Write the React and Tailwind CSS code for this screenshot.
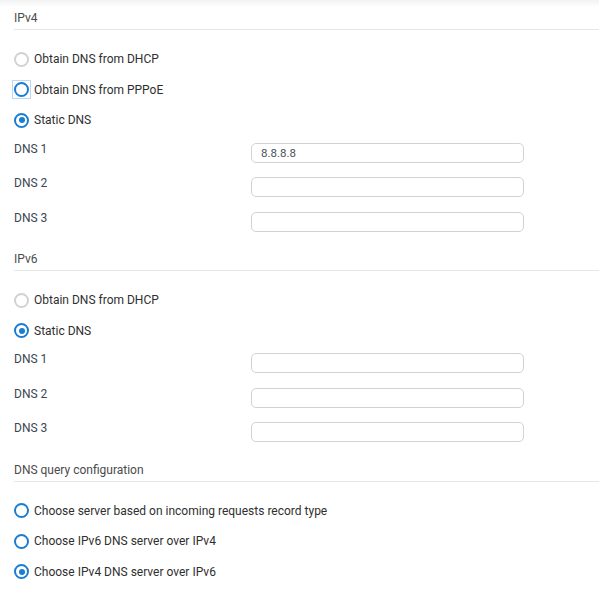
import { useState } from 'react';

function Radio({ label, checked, focused, muted }) {
  return (
    <label className="flex items-center h-[30.5px] pl-[13px] gap-[4px] cursor-pointer">
      <span
        className={`flex items-center justify-center w-[17px] h-[17px] ${
          focused ? 'outline outline-1 outline-[#bcd8f3]' : ''
        }`}
      >
        <span
          className={`flex items-center justify-center w-[15px] h-[15px] rounded-full border-2 ${
            muted ? 'border-[#d2d2d2]' : 'border-[#1a7dd1]'
          }`}
        >
          {checked && <span className="w-[6px] h-[6px] rounded-full bg-[#1a7dd1]" />}
        </span>
      </span>
      <span className="text-[12px] text-[#2f2f2f]">{label}</span>
    </label>
  );
}

function DnsRow({ label, value }) {
  return (
    <div className="flex h-[34.5px] pl-[14px]">
      <div className="w-[237px] mt-[6px] leading-[14px] text-[12px] text-[#3b4652]">{label}</div>
      <input
        defaultValue={value}
        className="mt-[7px] w-[273px] h-[20px] rounded-[5px] border border-[#cfd3d6] px-[9px] text-[11.5px] text-[#4a525c] outline-none"
      />
    </div>
  );
}

function Heading({ children, className = '' }) {
  return (
    <div className={`ml-[14px] h-[23px] leading-[23px] border-b border-[#e6e6e6] text-[12px] text-[#4b4b4b] ${className}`}>
      {children}
    </div>
  );
}

export default function App() {
  const [v4] = useState('static');

  return (
    <div className="w-[599px] h-[591px] bg-white overflow-hidden font-['Roboto',sans-serif]">
      <div className="h-[7px] bg-gradient-to-b from-[#f2f2f2] to-white" />

      <Heading>IPv4</Heading>
      <div className="mt-[14px]">
        <Radio label="Obtain DNS from DHCP" muted />
        <Radio label="Obtain DNS from PPPoE" focused />
        <Radio label="Static DNS" checked={v4 === 'static'} />
      </div>
      <DnsRow label="DNS 1" value="8.8.8.8" />
      <DnsRow label="DNS 2" />
      <DnsRow label="DNS 3" />

      <Heading className="mt-[9px]">IPv6</Heading>
      <div className="mt-[14px]">
        <Radio label="Obtain DNS from DHCP" muted />
        <Radio label="Static DNS" checked />
      </div>
      <DnsRow label="DNS 1" />
      <DnsRow label="DNS 2" />
      <DnsRow label="DNS 3" />

      <Heading className="mt-[9px]">DNS query configuration</Heading>
      <div className="mt-[14px]">
        <Radio label="Choose server based on incoming requests record type" />
        <Radio label="Choose IPv6 DNS server over IPv4" />
        <Radio label="Choose IPv4 DNS server over IPv6" checked />
      </div>
    </div>
  );
}
